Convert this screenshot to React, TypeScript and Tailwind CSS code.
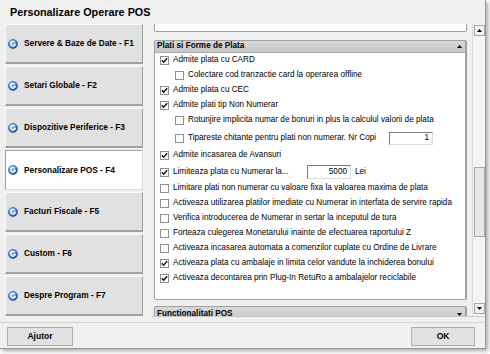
import React from "react";

const Globe = () => (
  <svg width="10" height="10" viewBox="0 0 10 10" className="shrink-0">
    <defs>
      <radialGradient id="gb" cx="35%" cy="30%" r="80%">
        <stop offset="0" stopColor="#9ccbff" />
        <stop offset="0.55" stopColor="#3b7fd0" />
        <stop offset="1" stopColor="#16488f" />
      </radialGradient>
    </defs>
    <circle cx="5" cy="5" r="4.6" fill="url(#gb)" stroke="#1d4b86" strokeWidth="0.5" />
    <path d="M6.9 3.3 A2.4 2.4 0 1 0 7.3 5.4 L5.3 5.4" stroke="#ffffff" strokeWidth="1.3" fill="none" />
  </svg>
);

const Box = ({ checked }: { checked?: boolean }) => (
  <span className="w-[9px] h-[9px] border border-[#8e8f8f] bg-white flex items-center justify-center shrink-0">
    {checked && (
      <svg width="7" height="7" viewBox="0 0 7 7">
        <path d="M0.8 3.3 L2.6 5.2 L6.2 1.2" stroke="#111" strokeWidth="1.4" fill="none" />
      </svg>
    )}
  </span>
);

const Row = ({ text, checked, indent }: { text: string; checked?: boolean; indent?: boolean }) => (
  <div className={`h-[15px] flex items-center gap-[4px] ${indent ? "pl-[20px]" : "pl-[5px]"}`}>
    <Box checked={checked} />
    <span className="whitespace-nowrap">{text}</span>
  </div>
);

const TriUp = () => (
  <svg width="5" height="3" viewBox="0 0 5 3"><path d="M0 3 L2.5 0 L5 3 Z" fill="#000" /></svg>
);
const TriDown = () => (
  <svg width="5" height="3" viewBox="0 0 5 3"><path d="M0 0 L2.5 3 L5 0 Z" fill="#000" /></svg>
);

const navItems = [
  "Servere & Baze de Date - F1",
  "Setari Globale - F2",
  "Dispozitive Periferice - F3",
  "Personalizare POS - F4",
  "Facturi Fiscale - F5",
  "Custom - F6",
  "Despre Program - F7",
];

export default function App() {
  return (
    <div className="w-[490px] h-[354px] bg-white overflow-hidden font-['Liberation_Sans',Arial,sans-serif] text-[8.2px] text-black">
      <div className="w-[486px] h-[349px] bg-[#f0f0f0] border-r border-b border-[#9a9a9a] shadow-[2px_2px_4px_rgba(0,0,0,0.35)] flex flex-col">
        {/* Title */}
        <div className="h-[24px] flex items-center pl-[10px] text-[10.8px] font-bold text-black">
          Personalizare Operare POS
        </div>

        {/* Main */}
        <div className="h-[294px] flex">
          {/* Nav */}
          <div className="ml-[5px] w-[138px] flex flex-col gap-[2px]">
            {navItems.map((t, i) =>
              i === 3 ? (
                <div
                  key={t}
                  className="h-[40px] flex items-center gap-[6px] pl-[2px] bg-white border border-[#a0a0a0] border-r-[#dcdcdc] border-b-[#dcdcdc] font-bold text-[8.3px] text-black"
                >
                  <Globe />
                  <span className="whitespace-nowrap">{t}</span>
                </div>
              ) : (
                <div
                  key={t}
                  className="h-[40px] flex items-center gap-[6px] pl-[2px] bg-[#e1e1e1] border border-t-[#f8f8f8] border-l-[#f8f8f8] border-r-[#a0a0a0] border-b-2 border-b-[#a0a0a0] font-bold text-[8.3px] text-black"
                >
                  <Globe />
                  <span className="whitespace-nowrap">{t}</span>
                </div>
              )
            )}
          </div>

          {/* Scroll area */}
          <div className="ml-[9px] flex h-[293px] border-b border-[#c8c8c8]">
            <div className="w-[320px] pl-[2px] pr-[5px] overflow-hidden flex flex-col">
              {/* partial top panel */}
              <div className="h-[8px] border-x border-b border-[#a0a0a0] rounded-b-[2px] bg-white shrink-0" />
              {/* Plati panel */}
              <div className="mt-[8px] border border-[#a0a0a0] border-r-2 rounded-[2px] shrink-0 bg-white">
                <div className="h-[12px] flex items-center justify-between pl-[2px] pr-[3px] bg-gradient-to-b from-[#d8d8d8] to-[#c6c6c6] border-b border-[#b0b0b0] font-bold text-black">
                  <span>Plati si Forme de Plata</span>
                  <TriUp />
                </div>
                <div className="h-[246px] pt-0">
                  <Row text="Admite plata cu CARD" checked />
                  <Row text="Colectare cod tranzactie card la operarea offline" indent />
                  <Row text="Admite plata cu CEC" checked />
                  <Row text="Admite plati tip Non Numerar" checked />
                  <Row text="Rotunjire implicita numar de bonuri in plus la calculul valorii de plata" indent />
                  <div className="h-[20px] flex items-center gap-[4px] pl-[20px]">
                    <Box />
                    <span className="whitespace-nowrap w-[197px]">Tipareste chitante pentru plati non numerar. Nr Copi</span>
                    <div className="w-[44px] h-[13px] bg-white border border-[#7a7a7a] border-r-[#dcdcdc] border-b-[#dcdcdc] flex items-center justify-end pr-[3px]">
                      1
                    </div>
                  </div>
                  <Row text="Admite incasarea de Avansuri" checked />
                  <div className="h-[18px] flex items-center gap-[4px] pl-[5px]">
                    <Box checked />
                    <span className="whitespace-nowrap w-[130px]">Limiteaza plata cu Numerar la...</span>
                    <div className="w-[44px] h-[14px] bg-white border border-[#7a7a7a] border-r-[#dcdcdc] border-b-[#dcdcdc] flex items-center justify-end pr-[3px]">
                      5000
                    </div>
                    <span>Lei</span>
                  </div>
                  <Row text="Limitare plati non numerar cu valoare fixa la valoarea maxima de plata" />
                  <Row text="Activeaza utilizarea platilor imediate cu Numerar in interfata de servire rapida" />
                  <Row text="Verifica introducerea de Numerar in sertar la inceputul de tura" />
                  <Row text="Forteaza culegerea Monetarului inainte de efectuarea raportului Z" />
                  <Row text="Activeaza incasarea automata a comenzilor cuplate cu Ordine de Livrare" />
                  <Row text="Activeaza plata cu ambalaje in limita celor vandute la inchiderea bonului" checked />
                  <Row text="Activeaza decontarea prin Plug-In RetuRo a ambalajelor reciclabile" checked />
                </div>
              </div>
              {/* Functionalitati panel */}
              <div className="mt-[6px] border border-[#a0a0a0] border-r-2 rounded-t-[2px] shrink-0">
                <div className="h-[14px] flex items-center justify-between pl-[2px] pr-[3px] bg-gradient-to-b from-[#d8d8d8] to-[#c6c6c6] font-bold text-black">
                  <span>Functionalitati POS</span>
                  <TriDown />
                </div>
              </div>
            </div>

            {/* Scrollbar */}
            <div className="w-[13px] bg-[#f4f4f4] border-l border-[#dadada] flex flex-col items-center">
              <div className="mt-[1px] w-[11px] h-[11px] border border-[#a6a6a6] bg-[#f0f0f0] flex items-center justify-center shrink-0">
                <TriUp />
              </div>
              <div className="h-[131px] shrink-0" />
              <div className="w-[11px] h-[70px] border border-[#a6a6a6] bg-[#e8e8e8] shrink-0" />
              <div className="flex-1" />
              <div className="mb-[2px] w-[11px] h-[11px] border border-[#a6a6a6] bg-[#f0f0f0] flex items-center justify-center shrink-0">
                <TriDown />
              </div>
            </div>
          </div>
        </div>

        {/* Footer */}
        <div className="mt-[4px] border-t border-[#d5d5d5] flex justify-between px-[7px] pt-[4px]">
          <div className="w-[66px] h-[19px] bg-[#e1e1e1] border border-[#adadad] flex items-center justify-center font-bold text-[8.5px] text-black">
            Ajutor
          </div>
          <div className="mr-[3px] w-[64px] h-[19px] bg-[#e1e1e1] border border-[#adadad] flex items-center justify-center font-bold text-[8.5px] text-black">
            OK
          </div>
        </div>
      </div>
    </div>
  );
}
